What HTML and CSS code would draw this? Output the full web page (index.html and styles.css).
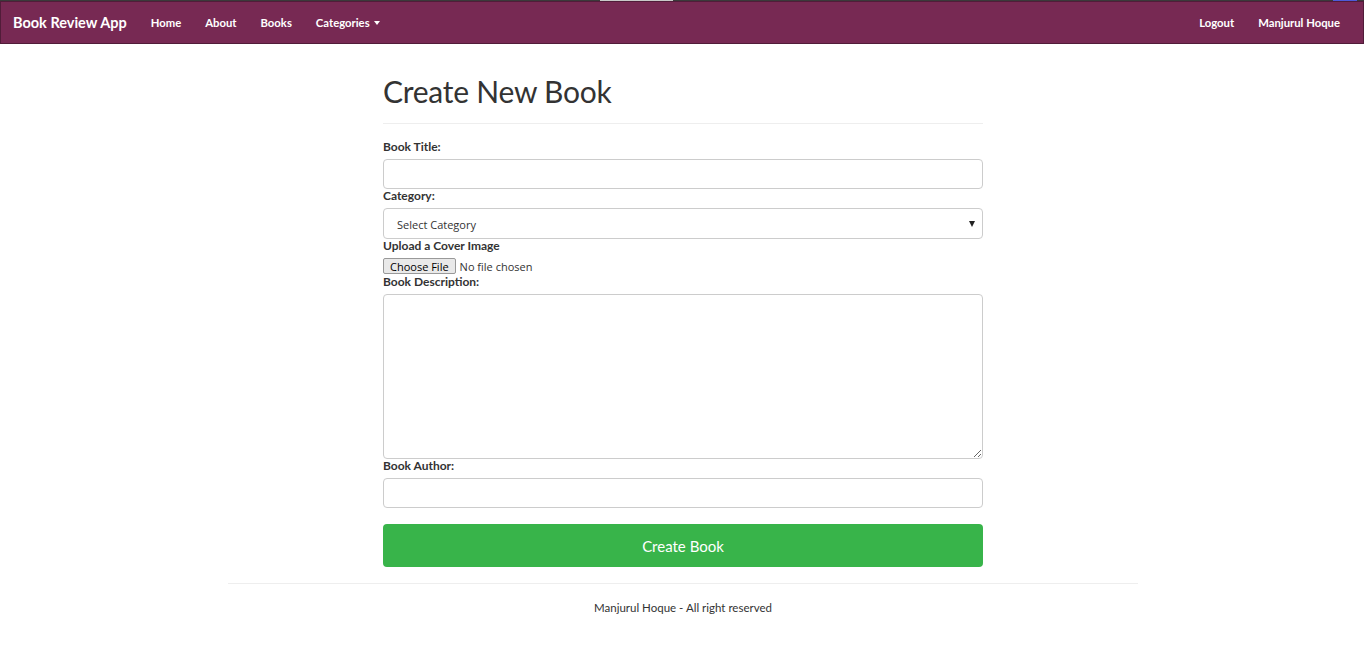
FILE: index.html
```html
<!DOCTYPE html>
<html lang="en">
<head>
<meta charset="utf-8">
<title>Create New Book</title>
<link rel="stylesheet" href="styles.css">
</head>
<body>
<div class="topstrip"><span class="seg-light"></span><span class="seg-blue"></span></div>
<nav class="navbar">
  <div class="nav-left">
    <a class="brand" href="#">Book Review App</a>
    <a class="nav-link" href="#">Home</a>
    <a class="nav-link" href="#">About</a>
    <a class="nav-link" href="#">Books</a>
    <a class="nav-link" href="#">Categories <span class="caret"></span></a>
  </div>
  <div class="nav-right">
    <a class="nav-link" href="#">Logout</a>
    <a class="nav-link" href="#">Manjurul Hoque</a>
  </div>
</nav>

<main class="page">
  <div class="form-wrap">
    <h1 class="page-title">Create New Book</h1>
    <form class="book-form">
      <label class="lbl" for="title">Book Title:</label>
      <input class="ctrl" id="title" type="text">

      <label class="lbl" for="cat">Category:</label>
      <div class="select-wrap">
        <select class="ctrl select" id="cat">
          <option>Select Category</option>
        </select>
      </div>

      <label class="lbl" for="cover">Upload a Cover Image</label>
      <input class="file" id="cover" type="file">

      <label class="lbl" for="desc">Book Description:</label>
      <textarea class="ctrl area" id="desc"></textarea>

      <label class="lbl" for="author">Book Author:</label>
      <input class="ctrl" id="author" type="text">

      <button class="btn-create" type="button">Create Book</button>
    </form>
  </div>
  <footer class="footer">
    <p>Manjurul Hoque - All right reserved</p>
  </footer>
</main>
</body>
</html>
```

FILE: styles.css
```css
* { box-sizing: border-box; }

html, body {
  margin: 0;
  padding: 0;
  background: #fff;
}

body {
  font-family: "Lato", "Open Sans", sans-serif;
  font-size: 13px;
  color: #333;
}

.topstrip {
  height: 1px;
  background: #3a3a3a;
  display: flex;
}
.seg-light {
  margin-left: 600px;
  width: 73px;
  background: #c9c9c9;
}
.seg-blue {
  margin-left: 660px;
  width: 24px;
  background: #4e5ad8;
}

.navbar {
  display: flex;
  justify-content: space-between;
  align-items: center;
  height: 43px;
  background: #772953;
  border: 1px solid #511c39;
}

.nav-left, .nav-right {
  display: flex;
  align-items: center;
}
.nav-right { padding-right: 11px; }

.brand {
  color: #fff;
  text-decoration: none;
  font-size: 14.5px;
  font-weight: 700;
  padding: 0 12px 0 12px;
}

.nav-link {
  color: #fff;
  text-decoration: none;
  font-size: 11.3px;
  font-weight: 700;
  padding: 0 12px;
  display: flex;
  align-items: center;
}

.caret {
  display: inline-block;
  width: 0;
  height: 0;
  margin-left: 4px;
  border-top: 4px solid #fff;
  border-left: 3.5px solid transparent;
  border-right: 3.5px solid transparent;
}

.page {
  width: 940px;
  margin: 0 auto;
  padding: 0 14px 0 16px;
}

.form-wrap {
  width: 600px;
  margin: 0 auto;
}

.page-title {
  margin: 29px 0 0;
  padding-bottom: 14px;
  font-size: 30px;
  font-weight: 400;
  line-height: 36px;
  color: #333;
  border-bottom: 1px solid #eee;
  letter-spacing: -0.25px;
}

.book-form {
  display: flex;
  flex-direction: column;
  padding-top: 16px;
}

.lbl {
  display: block;
  font-size: 12px;
  font-weight: 700;
  line-height: 14px;
  height: 14px;
  margin-bottom: 5px;
}

.ctrl {
  display: block;
  width: 100%;
  height: 30px;
  border: 1px solid #ccc;
  border-radius: 4px;
  background: #fff;
  font-family: "Open Sans", sans-serif;
  font-size: 11px;
  color: #333;
  padding: 4px 12px;
}

.select-wrap {
  position: relative;
}
.select {
  height: 31px;
  appearance: none;
  -webkit-appearance: none;
  padding-left: 13px;
  padding-top: 5px;
}
.select-wrap::after {
  content: "";
  position: absolute;
  right: 8px;
  top: 13px;
  border-top: 6px solid #222;
  border-left: 3.5px solid transparent;
  border-right: 3.5px solid transparent;
  pointer-events: none;
}

.file {
  display: block;
  height: 17px;
  font-family: "Open Sans", sans-serif;
  font-size: 11px;
  line-height: 16px;
  color: #333;
  margin: 0;
  padding: 0;
}
.file::file-selector-button {
  font-family: "Open Sans", sans-serif;
  font-size: 11px;
  padding: 0 6px;
  height: 16px;
  border: 1px solid #999;
  border-radius: 2px;
  background: #e9e9e9;
  margin-right: 4px;
}

.area {
  height: 165px;
  resize: vertical;
}

.btn-create {
  margin-top: 16px;
  height: 43px;
  width: 100%;
  border: none;
  border-radius: 4px;
  background: #38b44a;
  color: #fff;
  font-family: "Lato", "Open Sans", sans-serif;
  font-size: 15px;
}

.footer {
  margin-top: 16px;
  border-top: 1px solid #eee;
  text-align: center;
}
.footer p {
  margin: 16px 0 0;
  font-size: 11.5px;
  line-height: 16px;
}
```
